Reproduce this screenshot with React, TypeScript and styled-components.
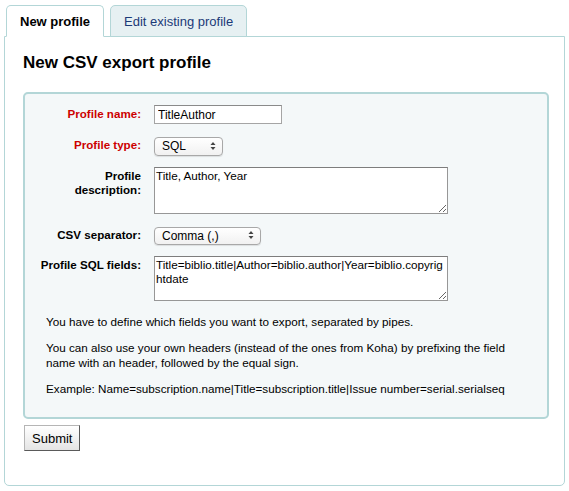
import React from 'react';
import styled, { createGlobalStyle } from 'styled-components';

const GlobalStyle = createGlobalStyle`
  html, body { margin: 0; padding: 0; background: #fff; }
  body { font-family: "Liberation Sans", Arial, Helvetica, sans-serif; color: #000; }
  * { box-sizing: border-box; }
`;

const TEAL = '#b3d6d7';

const Page = styled.div`
  width: 569px;
  padding: 5px 4px 4px 4px;
`;

const TabList = styled.div`
  display: flex;
  gap: 6px;
  padding-left: 2px;
  position: relative;
  z-index: 1;
  margin-bottom: -1px;
`;

const Tab = styled.div<{ $active?: boolean }>`
  height: 32px;
  padding: 0 13px;
  display: flex;
  align-items: center;
  border: 1px solid ${TEAL};
  border-bottom-color: ${(p) => (p.$active ? '#fff' : TEAL)};
  border-radius: 5px 5px 0 0;
  background: ${(p) => (p.$active ? '#fff' : '#e6f0f2')};
  font-size: 13px;
  font-weight: ${(p) => (p.$active ? 700 : 400)};
  color: ${(p) => (p.$active ? '#000' : '#1b3a78')};
  cursor: pointer;
`;

const Panel = styled.div`
  border: 1px solid ${TEAL};
  border-radius: 0 0 5px 5px;
  background: #fff;
  padding: 16px 15px 34px 18px;
`;

const Heading = styled.h1`
  margin: 0 0 19px 0;
  font-size: 17px;
  line-height: 20px;
  font-weight: 700;
  color: #000;
`;

const Fieldset = styled.fieldset`
  margin: 0;
  min-width: 0;
  border: 2px solid ${TEAL};
  border-radius: 5px;
  background: #f4f8f9;
  padding: 11px 0 21px 13px;
`;

const FormGrid = styled.div`
  display: grid;
  grid-template-columns: 103px 1fr;
  column-gap: 13px;
  row-gap: 12px;
  align-items: start;
`;

const Label = styled.label<{ $required?: boolean }>`
  font-size: 11.6px;
  font-weight: 700;
  line-height: 14px;
  padding-top: 2px;
  text-align: right;
  color: ${(p) => (p.$required ? '#cc0000' : '#000')};
`;

const TextInput = styled.input`
  width: 128px;
  height: 19px;
  margin: 0;
  padding: 0 3px;
  border: 1px solid #a5a5a5;
  border-top-color: #8a8a8a;
  background: #fff;
  font-family: inherit;
  font-size: 12px;
  color: #000;
  outline: none;
`;

const SelectWrap = styled.div<{ $w: number; $h: number }>`
  position: relative;
  width: ${(p) => p.$w}px;
  height: ${(p) => p.$h}px;
`;

const Select = styled.select`
  appearance: none;
  -webkit-appearance: none;
  width: 100%;
  height: 100%;
  margin: 0;
  padding: 0 0 0 7px;
  border: 1px solid #a8a8a8;
  border-radius: 4px;
  background: linear-gradient(#ffffff, #f1f1f1);
  box-shadow: 0 1px 1px rgba(0, 0, 0, 0.1);
  font-family: inherit;
  font-size: 12px;
  color: #000;
  outline: none;
`;

const Arrows = styled.svg`
  position: absolute;
  right: 7px;
  top: 50%;
  transform: translateY(-50%);
  pointer-events: none;
`;

const TextArea = styled.textarea<{ $h: number }>`
  display: block;
  width: 294px;
  height: ${(p) => p.$h}px;
  margin: 0;
  padding: 1px 1px;
  border: 1px solid #979797;
  border-top-color: #7d7d7d;
  background: #fff;
  font-family: inherit;
  font-size: 11.7px;
  line-height: 14px;
  color: #000;
  resize: both;
  outline: none;
  word-break: break-all;
`;

const Help = styled.div`
  margin-top: 13px;
  padding: 0 20px 0 8px;
`;

const HelpText = styled.p`
  margin: 0 0 11px 0;
  font-size: 11.7px;
  line-height: 15px;
  color: #000;
  &:last-child { margin-bottom: 0; }
`;

const SubmitButton = styled.button`
  display: block;
  margin: 6px 0 0 1px;
  height: 26px;
  padding: 0 7px;
  border: 1px solid;
  border-color: #b5b5b5 #5a5a5a #5a5a5a #b5b5b5;
  border-radius: 0;
  background: linear-gradient(#ffffff, #e4e4e4);
  font-family: inherit;
  font-size: 13px;
  color: #000;
  cursor: pointer;
`;

const UpDown = () => (
  <Arrows width="6" height="9" viewBox="0 0 6 9">
    <path d="M3 0.5 L5.5 3.5 L0.5 3.5 Z" fill="#444" />
    <path d="M3 8.5 L5.5 5.5 L0.5 5.5 Z" fill="#444" />
  </Arrows>
);

export default function App() {
  return (
    <>
      <GlobalStyle />
      <Page>
        <TabList>
          <Tab $active>New profile</Tab>
          <Tab>Edit existing profile</Tab>
        </TabList>
        <Panel>
          <Heading>New CSV export profile</Heading>
          <Fieldset>
            <FormGrid>
              <Label $required htmlFor="profile">Profile name:</Label>
              <TextInput id="profile" defaultValue="TitleAuthor" />

              <Label $required htmlFor="type">Profile type:</Label>
              <SelectWrap $w={69} $h={19}>
                <Select id="type" defaultValue="sql">
                  <option value="marc">MARC</option>
                  <option value="sql">SQL</option>
                </Select>
                <UpDown />
              </SelectWrap>

              <Label htmlFor="description">Profile description:</Label>
              <TextArea id="description" $h={47} spellCheck={false} defaultValue="Title, Author, Year" />

              <Label htmlFor="separator">CSV separator:</Label>
              <SelectWrap $w={107} $h={18}>
                <Select id="separator" defaultValue="comma">
                  <option value="comma">Comma (,)</option>
                  <option value="semicolon">Semicolon (;)</option>
                  <option value="pipe">Pipe (|)</option>
                  <option value="tab">Tabulation</option>
                </Select>
                <UpDown />
              </SelectWrap>

              <Label htmlFor="sql">Profile SQL fields:</Label>
              <TextArea
                id="sql"
                $h={45}
                spellCheck={false}
                defaultValue="Title=biblio.title|Author=biblio.author|Year=biblio.copyrightdate"
              />
            </FormGrid>
            <Help>
              <HelpText>You have to define which fields you want to export, separated by pipes.</HelpText>
              <HelpText>
                You can also use your own headers (instead of the ones from Koha) by prefixing the field name with an
                header, followed by the equal sign.
              </HelpText>
              <HelpText>Example: Name=subscription.name|Title=subscription.title|Issue number=serial.serialseq</HelpText>
            </Help>
          </Fieldset>
          <SubmitButton type="submit">Submit</SubmitButton>
        </Panel>
      </Page>
    </>
  );
}
